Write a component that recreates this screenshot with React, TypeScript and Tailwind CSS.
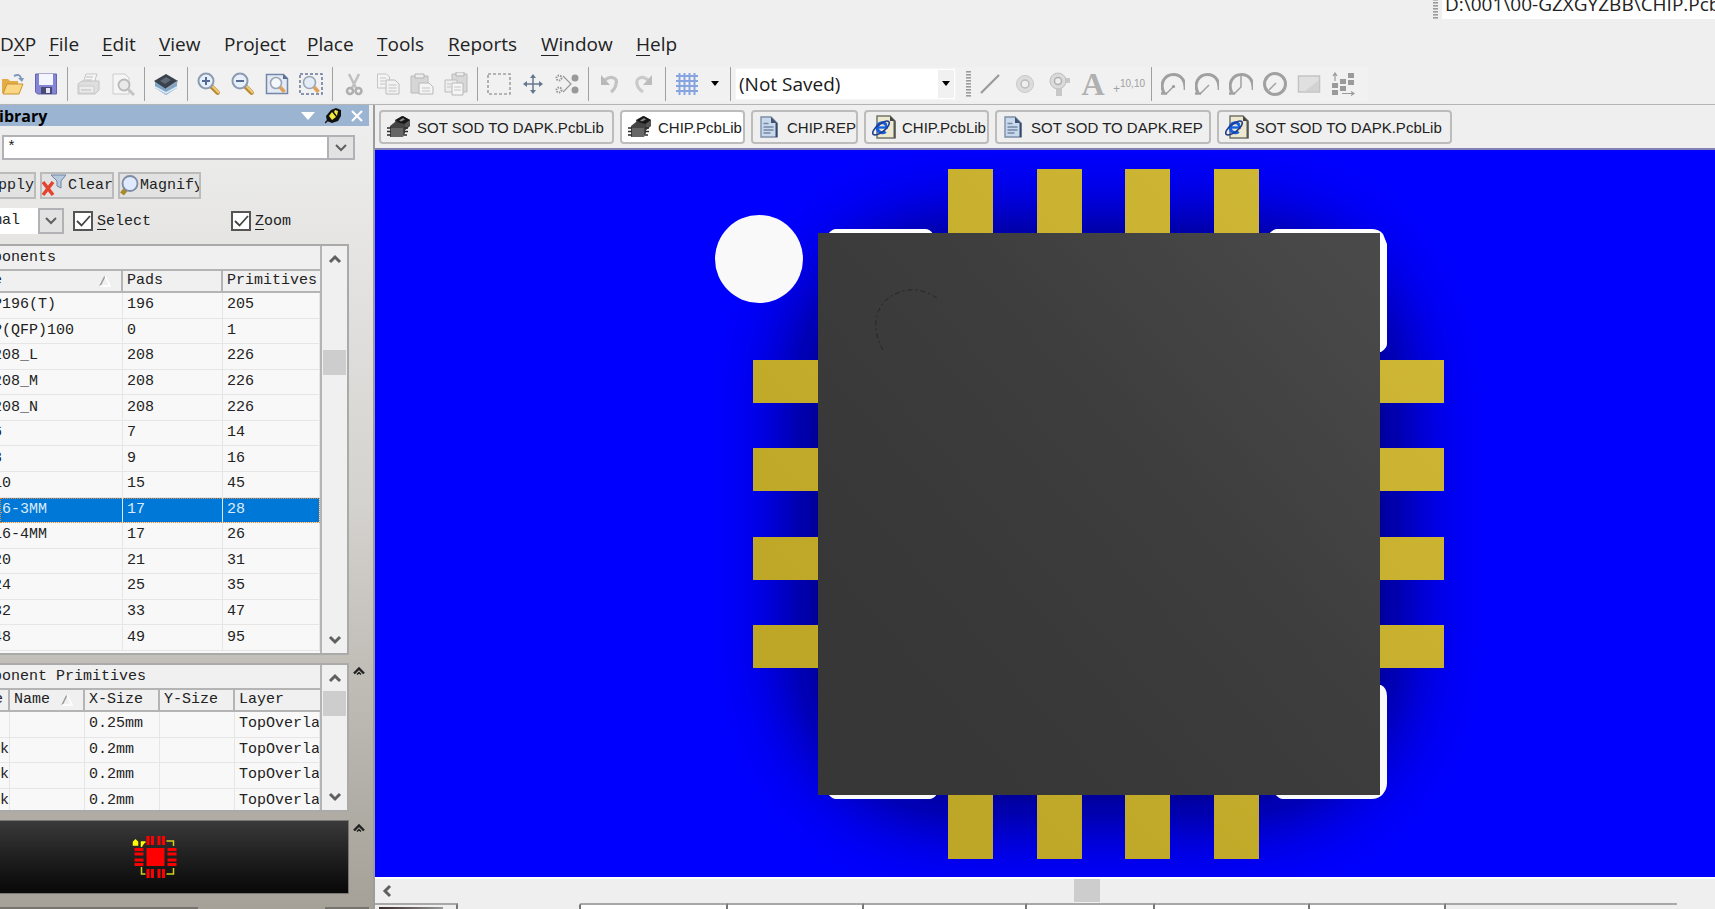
import React from 'react';

const menus = [
  { before: 'D', key: 'X', after: 'P', width: 'w-[49px]' },
  { before: '', key: 'F', after: 'ile', width: 'w-[53px]' },
  { before: '', key: 'E', after: 'dit', width: 'w-[57px]' },
  { before: '', key: 'V', after: 'iew', width: 'w-[65px]' },
  { before: 'Proje', key: 'c', after: 't', width: 'w-[83px]' },
  { before: '', key: 'P', after: 'lace', width: 'w-[70px]' },
  { before: '', key: 'T', after: 'ools', width: 'w-[71px]' },
  { before: '', key: 'R', after: 'eports', width: 'w-[93px]' },
  { before: '', key: 'W', after: 'indow', width: 'w-[95px]' },
  { before: '', key: 'H', after: 'elp', width: 'w-[60px]' },
];

const components = [
  ['P196(T)', '196', '205'],
  ['P(QFP)100', '0', '1'],
  ['208_L', '208', '226'],
  ['208_M', '208', '226'],
  ['208_N', '208', '226'],
  ['6', '7', '14'],
  ['8', '9', '16'],
  ['10', '15', '45'],
  ['16-3MM', '17', '28'],
  ['16-4MM', '17', '26'],
  ['20', '21', '31'],
  ['24', '25', '35'],
  ['32', '33', '47'],
  ['48', '49', '95'],
];

const primitives = [
  ['', '0.25mm', 'TopOverla'],
  ['k', '0.2mm', 'TopOverla'],
  ['k', '0.2mm', 'TopOverla'],
  ['k', '0.2mm', 'TopOverla'],
];

const tabs = [
  { label: 'SOT SOD TO DAPK.PcbLib', kind: 'chip', width: 'w-[235px]' },
  { label: 'CHIP.PcbLib', kind: 'chip', width: 'w-[125px]', active: true },
  { label: 'CHIP.REP', kind: 'doc', width: 'w-[107px]' },
  { label: 'CHIP.PcbLib', kind: 'web', width: 'w-[125px]' },
  { label: 'SOT SOD TO DAPK.REP', kind: 'doc', width: 'w-[216px]' },
  { label: 'SOT SOD TO DAPK.PcbLib', kind: 'web', width: 'w-[235px]' },
];

interface IconProps {
  children: React.ReactNode;
}

const Icon: React.FC<IconProps> = ({ children }) => (
  <svg viewBox="0 0 24 24" className="w-6 h-6 shrink-0" fill="none" aria-hidden="true">
    {children}
  </svg>
);

interface ToolProps {
  label: string;
  children: React.ReactNode;
}

const Tool: React.FC<ToolProps> = ({ label, children }) => (
  <button type="button" aria-label={label} className="w-[34px] h-[34px] shrink-0 flex items-center justify-center">
    <Icon>{children}</Icon>
  </button>
);

const Divider: React.FC = () => (
  <div className="w-[9px] shrink-0 flex justify-center">
    <div className="w-px h-[34px] bg-[#a0a0a0]" />
  </div>
);

const Grip: React.FC = () => (
  <svg viewBox="0 0 5 26" className="w-[5px] h-[26px] shrink-0" aria-hidden="true">
    {[0, 3, 6, 9, 12, 15, 18, 21, 24].map((y) => (
      <rect key={y} x="0" y={y} width="5" height="1.6" fill="#9b9b9b" />
    ))}
  </svg>
);

const Lens: React.FC<{ cx: number; cy: number; r: number }> = ({ cx, cy, r }) => (
  <>
    <path
      d={`M${cx + r * 0.75} ${cy + r * 0.75}l6 6`}
      stroke="#b98a35"
      strokeWidth="4.5"
      strokeLinecap="round"
    />
    <path
      d={`M${cx + r * 0.9} ${cy + r * 0.75}l5.6 5.6`}
      stroke="#f0cc78"
      strokeWidth="2"
      strokeLinecap="round"
    />
    <circle cx={cx} cy={cy} r={r} fill="#e6effc" stroke="#8d9bb0" strokeWidth="2" />
  </>
);

const Gauge: React.FC<{ children: React.ReactNode }> = ({ children }) => (
  <>
    <path d="M3 21C-2 11 4 2.500 12.500 2.500C20 2.500 25 9 24 18" stroke="#a0a0a0" strokeWidth="3" />
    <path d="M0 21.500h6" stroke="#a0a0a0" strokeWidth="2.500" />
    {children}
  </>
);

const TabIcon: React.FC<{ kind: string }> = ({ kind }) => {
  if (kind === 'chip') {
    return (
      <Icon>
        <path d="M8 5l7-4 8 4v6l-6 5-8-5z" fill="#333" />
        <path d="M9 5l7-4 7 4-7 5z" fill="#161616" />
        <path d="M12 5.500l4-2.500 2 1.500-4 2z" fill="#888" />
        <path d="M16 10l7-5v5l-7 7z" fill="#555" />
        <path d="M3 11l5-4 10 2v9l-2 4H3z" fill="#444" />
        <path d="M4 13h12v9H4z" fill="#666" />
        <path d="M0 13h4M0 16.500h4M0 20h4M17 13h4M17 16.500h4M17 20h3" stroke="#2b2b2b" strokeWidth="1.500" />
      </Icon>
    );
  }
  if (kind === 'web') {
    return (
      <Icon>
        <path d="M5 1h13l5 5v17H5z" fill="#ece9cf" stroke="#74746c" strokeWidth="1.500" />
        <path d="M18 1v5h5z" fill="#444" />
        <path d="M22.500 6v17" stroke="#555" strokeWidth="2" />
        <path d="M14 9.500a5 5 0 1 0-.5 7" stroke="#1560e0" strokeWidth="3.200" />
        <path d="M5 12.500h10.500" stroke="#1560e0" strokeWidth="2.400" />
        <path d="M14.500 13.500v-2a5 5 0 0 0-2-3" stroke="#1560e0" strokeWidth="2.400" />
        <ellipse cx="9" cy="13" rx="10" ry="4" transform="rotate(-38 9 13)" stroke="#243c8a" strokeWidth="1.600" />
      </Icon>
    );
  }
  return (
    <Icon>
      <path d="M4 2h10l6 6v14H4z" fill="#c9d9ec" stroke="#7d8fa8" strokeWidth="1.400" />
      <path d="M14 2v6h6z" fill="#3f5472" />
      <path d="M19.500 8v14" stroke="#34496b" strokeWidth="2" />
      <path d="M6.500 8.500h5M6.500 12h10M6.500 15h10M6.500 18h7" stroke="#7388a6" strokeWidth="1.300" />
    </Icon>
  );
};

const Chevron: React.FC<{ dir: 'up' | 'down' | 'left'; thin?: boolean }> = ({ dir, thin }) => {
  const paths = { up: 'M2 10l5-5 5 5', down: 'M2 4l5 5 5-5', left: 'M9 2L4 7l5 5' };
  return (
    <svg viewBox="0 0 14 14" className="w-3.5 h-3.5" fill="none" aria-hidden="true">
      <path d={paths[dir]} stroke="#606060" strokeWidth={thin ? 2 : 3} />
    </svg>
  );
};

const Collapse: React.FC = () => (
  <button type="button" aria-label="Collapse section" className="mr-1 mt-1">
    <svg viewBox="0 0 12 8" className="w-3 h-2" fill="none">
      <path d="M1 6.500l5-5 5 5" stroke="#222" strokeWidth="2.400" />
      <path d="M4 7.500l2-2 2 2" stroke="#222" strokeWidth="1.500" />
    </svg>
  </button>
);

const SortMark: React.FC = () => (
  <svg viewBox="0 0 12 12" className="w-3 h-3 shrink-0" fill="none" aria-hidden="true">
    <path d="M1 11L6 1" stroke="#999" strokeWidth="1.500" />
    <path d="M6 1l5 10H1" stroke="#fff" strokeWidth="1.500" />
  </svg>
);

const Toolbar: React.FC = () => (
  <div className="h-10 flex items-center border-b border-[#b4b4b4] pb-0.5 overflow-hidden">
    <div className="flex items-center -ml-[5px] bg-[#f1f1f1]">
      <Tool label="Open">
        <path d="M2 7h6l2 2h8v12H2z" fill="#e3ac45" />
        <path d="M3 22l4-10h16l-4 10z" fill="#fbd683" stroke="#c89334" />
        <path d="M14 4c4-2 6-1 7 2" stroke="#7e97bb" strokeWidth="2" />
        <path d="M18 6h6l-2 4z" fill="#7e97bb" />
      </Tool>
      <Tool label="Save">
        <path d="M1.500 2h21v20h-19l-2-2z" fill="#8585d6" stroke="#6464ae" />
        <path d="M5 2h14v11H5z" fill="#f3f5ff" />
        <path d="M7 15h11v7H7z" fill="#4a4a78" />
        <path d="M12 16h4v5h-4z" fill="#e4e6f4" />
      </Tool>
      <Divider />
      <Tool label="Print">
        <path d="M9 2h11l-3 9H6z" fill="#f7f7f7" stroke="#c6c6c6" />
        <path d="M1 12l4-3h17v9l-4 4H1z" fill="#dedede" stroke="#c4c4c4" />
        <path d="M2 14h15v7H2z" fill="#ebebeb" stroke="#ccc" />
        <path d="M4 18h10M9 5h7M8 8h7" stroke="#bbb" />
      </Tool>
      <Tool label="Print Preview">
        <path d="M2 2h12l4 4v16H2z" fill="#f5f5f5" stroke="#ccc" />
        <circle cx="13" cy="13" r="5.500" fill="#e9e9e9" stroke="#b9b9b9" strokeWidth="1.800" />
        <path d="M17 17l6 6" stroke="#c4c4c4" strokeWidth="3" />
      </Tool>
      <Divider />
      <Tool label="Library">
        <path d="M1 9v7l11 7 11-7V9z" fill="#7fa5c6" />
        <path d="M1 15l11 6 11-6" stroke="#dceaf5" strokeWidth="1.800" />
        <path d="M0 9l12-7 12 7-12 8z" fill="#39414c" />
        <path d="M6 9l6-4 5 3-6 4z" fill="#5f6975" />
        <path d="M12 17l12-8" stroke="#9aa9b8" strokeWidth="1.500" />
      </Tool>
      <Divider />
      <Tool label="Zoom In">
        <Lens cx={9} cy={9} r={7.500} />
        <path d="M5 9h8M9 5v8" stroke="#566b8f" strokeWidth="2" />
      </Tool>
      <Tool label="Zoom Out">
        <Lens cx={9} cy={9} r={7.500} />
        <path d="M5 9h8" stroke="#566b8f" strokeWidth="2" />
      </Tool>
      <Tool label="Fit Document">
        <path d="M1.500 2.500h17l4 4v15h-21z" fill="#e3eaf4" stroke="#7388a8" strokeWidth="1.500" />
        <path d="M18 2v5h5z" fill="#5b6f92" />
        <circle cx="11" cy="11" r="5.500" fill="#f4f8fd" stroke="#9aa5b5" strokeWidth="1.600" />
        <path d="M15 15l4.500 5" stroke="#dca15a" strokeWidth="3.500" />
      </Tool>
      <Tool label="Zoom Area">
        <path d="M1 2h22v20H1z" stroke="#66779a" strokeWidth="1.500" strokeDasharray="3 2" />
        <circle cx="10.500" cy="10.500" r="6" fill="#e4ecf7" stroke="#9aa5b5" strokeWidth="1.600" />
        <path d="M15 15l4.500 5" stroke="#dca15a" strokeWidth="3.500" />
      </Tool>
      <Divider />
      <Tool label="Cut">
        <path d="M7 2l7 14M17 2l-7 14" stroke="#c0c0c0" strokeWidth="2.500" />
        <circle cx="8" cy="19" r="3" stroke="#aeaeae" strokeWidth="2.500" />
        <circle cx="16.500" cy="19" r="3" stroke="#aeaeae" strokeWidth="2.500" />
      </Tool>
      <Tool label="Copy">
        <path d="M1.500 2h9l3 3v11h-12z" fill="#f4f4f4" stroke="#c4c4c4" />
        <path d="M10 8h9l4 4v10H10z" fill="#f2f2f2" stroke="#bcbcbc" />
        <path d="M4 6h6M4 9h5M4 12h5M12.500 13h8M12.500 16h8M12.500 19h8" stroke="#c4c4c4" />
      </Tool>
      <Tool label="Paste">
        <path d="M1 4h17v17H1z" fill="#d6d6d6" stroke="#bbb" />
        <path d="M5 2h9v4H5z" fill="#ededed" stroke="#b4b4b4" />
        <path d="M9 11h10l4 4v7H9z" fill="#f4f4f4" stroke="#b8b8b8" />
        <path d="M12 16h8M12 19h8" stroke="#c4c4c4" />
      </Tool>
      <Tool label="Paste Special">
        <path d="M8 2h15v18H8z" fill="#d8d8d8" stroke="#bcbcbc" />
        <path d="M12 0h8v4h-8z" fill="#ececec" stroke="#b4b4b4" />
        <path d="M1 8h12v12H1z" fill="#eee" stroke="#bcbcbc" />
        <path d="M8 11h11v12H8z" fill="#f6f6f6" stroke="#b8b8b8" />
        <path d="M3 12h4M3 15h4M10 15h7M10 18h7" stroke="#c4c4c4" />
      </Tool>
      <Divider />
      <Tool label="Select Area">
        <path d="M1 2h22v20H1z" stroke="#a0a0a0" strokeWidth="1.600" strokeDasharray="3 2" />
      </Tool>
      <Tool label="Move">
        <path d="M12 3v18M3 12h18" stroke="#66788f" strokeWidth="1.500" />
        <path d="M12 2l3 4h-6zM12 22l3-4h-6zM2 12l4-3v6zM22 12l-4-3v6z" fill="#66788f" />
      </Tool>
      <Tool label="Clear Selection">
        <path d="M8 4l8 8-8 8" stroke="#999" strokeWidth="1.200" />
        <circle cx="4" cy="6" r="2.500" stroke="#999" strokeWidth="2" strokeDasharray="1.500 1" />
        <circle cx="4" cy="18" r="2.500" stroke="#999" strokeWidth="2" strokeDasharray="1.500 1" />
        <circle cx="20" cy="6" r="3.500" fill="#999" />
        <circle cx="20" cy="18" r="3.500" fill="#999" />
      </Tool>
      <Divider />
      <Tool label="Undo">
        <path d="M7 8c6-5 13-2 11 4-.5 3-2 6-5 8" stroke="#c2c2c2" strokeWidth="3.200" />
        <path d="M3 3v10h9z" fill="#b8b8b8" />
      </Tool>
      <Tool label="Redo">
        <path d="M16 8C10 3 4 6 5 12c.5 3 3 6 6 8" stroke="#cacaca" strokeWidth="3.200" />
        <path d="M20 3v10h-9z" fill="#bcbcbc" />
      </Tool>
      <Divider />
      <Tool label="Grid">
        <path d="M1 4h22M1 9h22M1 14h22M1 19h22M4.500 1v22M9.500 1v22M14.500 1v22M19.500 1v22" stroke="#86a5e0" strokeWidth="2" />
      </Tool>
      <button type="button" aria-label="Grid options" className="w-[22px] h-[34px] flex items-center justify-center">
        <svg viewBox="0 0 8 5" className="w-2 h-[5px]"><path d="M0 0h8L4 5z" /></svg>
      </button>
      <Divider />
      <div className="relative flex items-center">
        <select
          aria-label="Saved layout"
          className="w-[221px] h-8 appearance-none bg-white border border-[#f4f4f4] pl-[3px] text-[19px] leading-6 text-[#1a1a1a]"
        >
          <option>(Not Saved)</option>
        </select>
        <span className="pointer-events-none absolute right-0.5 w-4 h-7 bg-[#f1f1f1] flex items-center justify-center">
          <svg viewBox="0 0 8 5" className="w-2 h-[5px]"><path d="M0 0h8L4 5z" /></svg>
        </span>
      </div>
    </div>
    <div className="flex items-center bg-[#f1f1f1] pl-2.5 pr-2">
      <div className="w-[7px] flex"><Grip /></div>
      <Tool label="Line">
        <path d="M3 21L21 3" stroke="#9a9a9a" strokeWidth="2.200" />
      </Tool>
      <Tool label="Pad">
        <circle cx="13" cy="12" r="8.500" fill="#dcdcdc" stroke="#c8c8c8" />
        <circle cx="13" cy="12" r="4" fill="#eee" stroke="#bbb" strokeWidth="1.500" />
      </Tool>
      <Tool label="Via">
        <path d="M10 12h6v12h-6zM16 6h8v5h-8z" fill="#c8c8c8" />
        <circle cx="12" cy="9" r="8" fill="#dadada" stroke="#c0c0c0" />
        <circle cx="12" cy="9" r="3.500" fill="#eee" stroke="#b0b0b0" strokeWidth="1.500" />
      </Tool>
      <button
        type="button"
        className="w-9 h-[34px] flex items-center justify-center font-['Liberation_Serif',serif] text-[32px] font-bold text-[#b0b0b0]"
      >
        A
      </button>
      <button
        type="button"
        className="w-9 h-[34px] flex items-center justify-center font-['Liberation_Sans',sans-serif] text-[#a0a0a0]"
      >
        <span className="text-xs pt-2.5">+</span>
        <span className="text-[10px] leading-4">10,10</span>
      </button>
      <Divider />
      <Tool label="Arc by Centre">
        <Gauge><path d="M12 15l-7 7" stroke="#a0a0a0" strokeWidth="1.500" /><circle cx="12.500" cy="14.500" r="1.600" fill="#999" /></Gauge>
      </Tool>
      <Tool label="Arc by Edge">
        <Gauge><path d="M14 13l-9 9" stroke="#a0a0a0" strokeWidth="1.500" /></Gauge>
      </Tool>
      <Tool label="Arc Any Angle">
        <Gauge><path d="M12 4v11l-7 7" stroke="#a0a0a0" strokeWidth="1.500" /></Gauge>
      </Tool>
      <Tool label="Full Circle">
        <circle cx="12" cy="12" r="10.500" stroke="#a0a0a0" strokeWidth="3" />
        <path d="M13 11l-7 7" stroke="#a0a0a0" strokeWidth="1.500" />
      </Tool>
      <Tool label="Fill">
        <path d="M1.500 4h21v16h-21z" fill="#e0e0e0" stroke="#c4c4c4" strokeWidth="1.500" />
        <path d="M22 8v11H8z" fill="#d2d2d2" />
      </Tool>
      <Tool label="Array Paste">
        <path d="M1 11h6v5H1zM1 18h6v5H1zM9 7h6v5H9zM9 14h6v5H9zM17 1h6v5h-6zM17 8h6v5h-6z" fill="#9a9a9a" />
        <path d="M4 9V2M2 4l2-3 2 3M11 21.500h11M20 19.500l3 2-3 2" stroke="#9a9a9a" strokeWidth="1.200" />
      </Tool>
    </div>
  </div>
);

const ScrollColumn: React.FC<{ thumb: string }> = ({ thumb }) => (
  <div className="w-[25px] shrink-0 bg-[#f0f0f0] flex flex-col items-center justify-between py-1.5 relative">
    <Chevron dir="up" />
    <div className={`absolute left-px w-[23px] h-[25px] bg-[#cdcdcd] ${thumb}`} />
    <Chevron dir="down" />
  </div>
);

const listHead = 'relative text-left font-normal h-[22px] p-0 bg-[#f0f0f0] border-b-2 border-[#b4b4b4]';
const listCaption = 'h-[25px] bg-[#f0f0f0] border-b-2 border-[#b4b4b4] text-left leading-6';
const listCell = 'p-0 pl-1 border-r border-b border-[#e6e6e6] overflow-hidden';

const LibraryPanel: React.FC = () => (
  <aside className="w-[375px] shrink-0 flex flex-col overflow-hidden border-r-2 border-[#9c9c9c] bg-linear-to-b from-[#efefef] via-[#d4d2ce] to-[#a5a198] font-['Liberation_Mono',monospace] text-[15px] leading-5 text-[#222]">
    <div className="h-[21px] shrink-0 mr-1 bg-[#9ab4d2] flex items-center justify-between overflow-hidden">
      <h2 className="-ml-[10px] font-['Open_Sans',sans-serif] font-bold text-base text-black">Library</h2>
      <div className="flex items-center gap-2.5 pr-1.5">
        <button type="button" aria-label="Panel menu">
          <svg viewBox="0 0 14 8" className="w-3.5 h-2"><path d="M0 0h14L7 8z" fill="#fff" /></svg>
        </button>
        <button type="button" aria-label="Pin panel">
          <svg viewBox="0 0 16 16" className="w-4 h-4" fill="none">
            <path d="M0 15l4-4" stroke="#111" strokeWidth="1.500" />
            <path d="M1 8l5-6 5-2 5 2v6l-3 5-6 2-5-2z" fill="#111" />
            <path d="M4 8l3-4 4 5-4 3zM10 2l3 1-1 5-3-4z" fill="#f2ea3c" />
          </svg>
        </button>
        <button type="button" aria-label="Close panel">
          <svg viewBox="0 0 12 12" className="w-3 h-3"><path d="M1 1l10 10M11 1L1 11" stroke="#fff" strokeWidth="2.200" /></svg>
        </button>
      </div>
    </div>

    <div className="mt-[9px] ml-0.5 mr-[18px] h-[25px] shrink-0 flex border-2 border-[#b2b2b6] bg-white">
      <input aria-label="Mask" defaultValue="*" className="flex-1 min-w-0 pl-[3px] outline-none" />
      <button type="button" aria-label="Show masks" className="w-[26px] bg-[#e2e2e2] border-l-2 border-[#b2b2b6] flex items-center justify-center">
        <Chevron dir="down" thin />
      </button>
    </div>

    <div className="mt-3 shrink-0 flex gap-1 h-[27px]">
      <button type="button" className="w-9 flex items-center justify-end border-2 border-l-0 border-[#bbb] bg-[#e2e2e2]">Apply</button>
      <button type="button" className="w-[74px] flex items-center border-2 border-[#bbb] bg-[#e2e2e2] overflow-hidden">
        <Icon>
          <path d="M9 1h15l-5 6v7l-4-2V7z" fill="#b9c9dd" stroke="#6f85a3" />
          <path d="M1 8l10 13M11 8L1 21" stroke="#e5432d" strokeWidth="3.500" />
        </Icon>
        <span className="pl-0.5">Clear</span>
      </button>
      <button type="button" className="w-[83px] flex items-center border-2 border-[#bbb] bg-[#e2e2e2] overflow-hidden">
        <span className="w-[19px] shrink-0 flex">
          <svg viewBox="0 0 19 22" className="w-[19px] h-[22px]" fill="none">
            <path d="M6 14l-4 5" stroke="#a98b2c" strokeWidth="5" />
            <circle cx="10" cy="8.500" r="7.500" fill="#dfeaff" stroke="#7d8ba3" strokeWidth="1.800" />
          </svg>
        </span>
        <span className="pl-px">Magnify</span>
      </button>
    </div>

    <div className="mt-2 shrink-0 flex items-center h-[27px]">
      <div className="relative flex w-16 h-[26px] overflow-hidden">
        <select aria-label="Display mode" className="-ml-[34px] w-[98px] shrink-0 appearance-none bg-white">
          <option>Normal</option>
        </select>
        <span className="pointer-events-none absolute right-0 w-[26px] h-[26px] border-2 border-[#b2b2b6] bg-[#e2e2e2] flex items-center justify-center">
          <Chevron dir="down" thin />
        </span>
      </div>
      <CheckBox label="elect" hotkey="S" className="ml-[9px] w-[158px]" />
      <CheckBox label="oom" hotkey="Z" className="" />
    </div>

    <div className="mt-[10px] mr-6 shrink-0 flex border-y-2 border-r-2 border-[#aaa]">
      <div className="flex-1 min-w-0 h-[407px] bg-[#f8f8f8] border-r-2 border-[#b4b4b4] overflow-hidden">
        <table className="w-full table-fixed border-separate border-spacing-0 whitespace-nowrap">
          <caption className={listCaption}>
            <span className="-ml-[34px]">Components</span>
          </caption>
          <colgroup>
            <col className="w-[123px]" />
            <col className="w-[100px]" />
            <col />
          </colgroup>
          <thead>
            <tr>
              <th className={listHead}>
                <span className="flex items-center justify-between pr-2.5 border-r-2 border-[#b4b4b4]">
                  <span className="-ml-[34px]">Name</span>
                  <SortMark />
                </span>
              </th>
              <th className={listHead}><span className="block pl-1 border-r-2 border-[#b4b4b4]">Pads</span></th>
              <th className={listHead}><span className="block pl-1">Primitives</span></th>
            </tr>
          </thead>
        </table>
        <table aria-label="Component list" className="w-full h-[358px] table-fixed border-separate border-spacing-0 whitespace-nowrap">
          <colgroup>
            <col className="w-[123px]" />
            <col className="w-[100px]" />
            <col />
          </colgroup>
          <tbody>
            {components.map(([name, pads, count]) => (
              <tr
                key={name}
                className={
                  name === '16-3MM'
                    ? 'bg-[#0078d7] text-[#dcebfa] outline outline-dotted outline-[#e08a3c] -outline-offset-1'
                    : ''
                }
              >
                <td className={listCell}><span className="-ml-[11px]">{name}</span></td>
                <td className={listCell}>{pads}</td>
                <td className={listCell}>{count}</td>
              </tr>
            ))}
          </tbody>
        </table>
      </div>
      <ScrollColumn thumb="top-[104px]" />
    </div>

    <div className="mt-2 shrink-0 flex">
      <div className="w-[349px] flex border-y-2 border-r-2 border-[#aaa]">
        <div className="flex-1 min-w-0 h-[145px] bg-[#f8f8f8] border-r-2 border-[#b4b4b4] overflow-hidden">
          <table className="w-full table-fixed border-separate border-spacing-0 whitespace-nowrap">
            <caption className={listCaption}>
              <span className="-ml-[34px]">Component Primitives</span>
            </caption>
            <colgroup>
              <col className="w-[10px]" />
              <col className="w-[75px]" />
              <col className="w-[75px]" />
              <col className="w-[75px]" />
              <col />
            </colgroup>
            <thead>
              <tr>
                <th className={listHead}>
                  <span className="flex justify-end border-r-2 border-[#b4b4b4] pr-[5px]">Type</span>
                </th>
                <th className={listHead}>
                  <span className="flex items-center justify-between pl-1 pr-2.5 border-r-2 border-[#b4b4b4]">Name<SortMark /></span>
                </th>
                <th className={listHead}><span className="block pl-1 border-r-2 border-[#b4b4b4]">X-Size</span></th>
                <th className={listHead}><span className="block pl-1 border-r-2 border-[#b4b4b4]">Y-Size</span></th>
                <th className={listHead}><span className="block pl-1">Layer</span></th>
              </tr>
            </thead>
          </table>
          <table aria-label="Primitive list" className="w-full h-[102px] table-fixed border-separate border-spacing-0 whitespace-nowrap">
            <colgroup>
              <col className="w-[10px]" />
              <col className="w-[75px]" />
              <col className="w-[75px]" />
              <col className="w-[75px]" />
              <col />
            </colgroup>
            <tbody>
              {primitives.map(([type, size, layer], i) => (
                <tr key={i}>
                  <td className="p-0 border-r border-b border-[#e6e6e6] overflow-hidden">{type}</td>
                  <td className={listCell} />
                  <td className={listCell}>{size}</td>
                  <td className={listCell} />
                  <td className={listCell}>{layer}</td>
                </tr>
              ))}
            </tbody>
          </table>
        </div>
        <ScrollColumn thumb="top-[26px]" />
      </div>
      <div className="flex-1 flex justify-center items-start"><Collapse /></div>
    </div>

    <div className="mt-2 shrink-0 flex">
      <div className="w-[349px] h-[74px] border border-l-0 border-[#777] bg-linear-to-b from-[#3a3a3a] to-[#080808]">
        <svg viewBox="0 0 347 72" className="w-full h-full" aria-hidden="true">
          <path d="M146 27h18v18h-18z" fill="#f00" />
          <path
            d="M147.500 15v9M152 15v9M158.500 15v9M163 15v9M147.500 48v9M152 48v9M158.500 48v9M163 48v9M134 28.500h9M134 33h9M134 39h9M134 43.500h9M167 28.500h9M167 33h9M167 39h9M167 43.500h9"
            stroke="#f00"
            strokeWidth="3"
          />
          <path d="M133 24v-3l2-2 2 2v3zM141 26v-5h4" fill="#ff0" stroke="#ff0" strokeWidth="1.500" />
          <path d="M166 20h7v5M141 46v7h4M166 53h7v-6" fill="none" stroke="#cfcf20" strokeWidth="1.500" />
        </svg>
      </div>
      <div className="flex-1 flex justify-center items-start"><Collapse /></div>
    </div>
    <div className="mt-auto h-0.5 shrink-0 flex justify-between pr-1">
      <div className="w-[198px] bg-[#77736f]" />
      <div className="w-11 bg-[#77736f]" />
    </div>
  </aside>
);

interface CheckBoxProps {
  label: string;
  hotkey: string;
  className: string;
}

function CheckBox({ label, hotkey, className }: CheckBoxProps) {
  return (
    <label className={`flex items-center gap-1 ${className}`}>
      <span className="relative flex w-5 h-5">
        <input type="checkbox" defaultChecked className="peer w-5 h-5 appearance-none bg-white border-2 border-[#555]" />
        <svg viewBox="0 0 20 20" className="pointer-events-none absolute inset-0 hidden peer-checked:block" fill="none">
          <path d="M4 10l4.500 4.500L17 5" stroke="#444" strokeWidth="1.800" />
        </svg>
      </span>
      <span className="pt-0.5"><u className="underline-offset-4">{hotkey}</u>{label}</span>
    </label>
  );
}

const ChipView: React.FC = () => (
  <svg viewBox="375 150 1340 727" className="block w-full flex-1 min-h-0 bg-[#00f]" role="img" aria-label="Chip package in 3D view">
    <defs>
      <filter id="soft" x="-40%" y="-40%" width="180%" height="180%">
        <feGaussianBlur stdDeviation="44" />
      </filter>
      <linearGradient id="body" x1="0.1" y1="0.700" x2="0.9" y2="0">
        <stop offset="0" stopColor="#373737" />
        <stop offset="0.500" stopColor="#3d3d3d" />
        <stop offset="1" stopColor="#494949" />
      </linearGradient>
      <linearGradient id="gold" gradientUnits="userSpaceOnUse" x1="850" y1="700" x2="1350" y2="200">
        <stop offset="0" stopColor="#bea626" />
        <stop offset="1" stopColor="#cfb835" />
      </linearGradient>
    </defs>
    <rect x="802" y="232" width="592" height="578" rx="150" fill="#000010" opacity="0.680" filter="url(#soft)" />
    <circle cx="759" cy="259" r="44" fill="#f9f9f9" />
    <path d="M828 234q4-5 8-5h89q5 0 8 5v10H828zM1269 234q4-5 8-5h94q8 0 12 5l4 10v100q0 4-6 8h-20V244h-92z" fill="#fff" />
    <path d="M828 794q4 5 8 5h93q5 0 8-5v-10H828zM1275 794q4 5 8 5h88q8 0 12-5 4-5 4-11V696q0-8-6-11h-20v99h-86z" fill="#fafafa" />
    {[948, 1037, 1125, 1214].map((x) => (
      <path key={x} d={`M${x} 169h45v70h-45zM${x} 790h45v69h-45z`} fill="url(#gold)" />
    ))}
    {[360, 448, 537, 625].map((y) => (
      <path key={y} d={`M753 ${y}h70v43h-70zM1375 ${y}h69v43h-69z`} fill="url(#gold)" />
    ))}
    <rect x="818" y="233" width="562" height="562" fill="url(#body)" />
    <path d="M883 350c-10-18-10-36 2-49 14-13 35-16 53-2" fill="none" stroke="#262626" strokeDasharray="5 3 2 3" />
  </svg>
);

const sheets = [
  'w-[83px] bg-[#efefef]',
  'w-[123px] bg-[#efefef] border-t-[#efefef]',
  'w-[147px] bg-white',
  'w-[136px] bg-white',
  'w-[163px] bg-white',
  'w-[128px] bg-white',
  'w-[155px] bg-white',
  'w-[136px] bg-white',
];

const App: React.FC = () => {
  return (
    <div className="h-screen flex flex-col overflow-hidden bg-[#efefef] font-['Open_Sans',sans-serif] text-[#222]">
      <header className="shrink-0">
        <div className="h-[22px] flex justify-end">
          <div className="w-[282px] h-[19px] flex items-end overflow-hidden">
            <div className="w-[9px] flex"><Grip /></div>
            <input
              aria-label="Document path"
              defaultValue="D:\001\00-GZXGYZBB\CHIP.PcbLib"
              className="flex-1 min-w-0 h-[30px] bg-white pl-[3px] text-[19px] leading-[30px] outline-none"
            />
          </div>
        </div>
        <nav className="h-[43px] flex items-center text-[19px] leading-7">
          {menus.map(({ before, key, after, width }) => (
            <button key={before + key + after} type="button" className={`${width} shrink-0 text-left whitespace-nowrap`}>
              {before}
              <u className="underline-offset-4">{key}</u>
              {after}
            </button>
          ))}
        </nav>
        <Toolbar />
      </header>

      <div className="flex-1 min-h-0 flex">
        <LibraryPanel />
        <main className="flex-1 min-w-0 flex flex-col">
          <div className="h-[45px] shrink-0 pl-1 pt-[5px] flex items-start gap-1.5 border-b-2 border-[#8080b4] font-['Liberation_Sans',sans-serif] text-[15px]">
            {tabs.map(({ label, kind, width, active }, i) => (
              <button
                key={i}
                type="button"
                className={`${width} h-[34px] shrink-0 flex items-center border-2 border-[#bcbcbc] rounded-[4px] whitespace-nowrap ${
                  active ? 'bg-white' : 'bg-[#efefef]'
                } ${kind === 'doc' ? 'pl-1' : 'pl-1.5'}`}
              >
                <TabIcon kind={kind} />
                <span className="pl-1.5 pt-0.5">{label}</span>
              </button>
            ))}
          </div>
          <ChipView />
          <div className="h-[26px] shrink-0 flex items-center border-t-2 border-white pl-1.5">
            <button type="button" aria-label="Scroll left"><Chevron dir="left" /></button>
            <div className="flex-1 flex justify-center h-full">
              <div className="w-[26px] h-[23px] bg-[#cdcdcd] ml-16" />
            </div>
          </div>
          <div className="h-1.5 shrink-0 flex">
            {sheets.map((sheet, i) => (
              <div key={i} className={`${sheet} border-t-2 border-t-[#a8a8a8] border-r-2 border-r-[#777] flex items-end pl-1`}>
                {i === 0 && <div className="w-16 h-0.5 bg-linear-to-r from-[#3a2d2d] to-[#999]" />}
              </div>
            ))}
            <div className="flex-1 mr-[38px] border-t-2 border-[#a8a8a8]" />
          </div>
        </main>
      </div>
    </div>
  );
};

export default App;
